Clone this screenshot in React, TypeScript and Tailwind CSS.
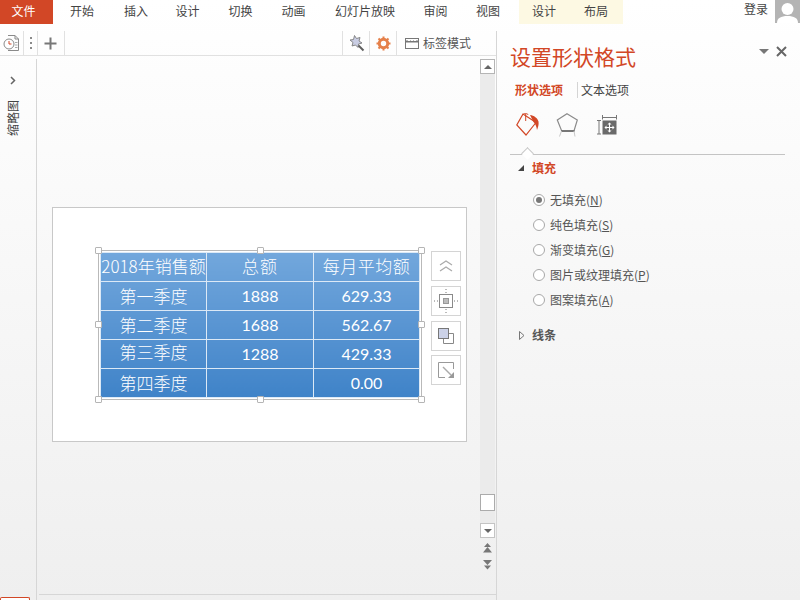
const cjk = "font-['Noto_Sans_CJK_SC','Liberation_Sans',sans-serif]";

const tabs = [
  { label: "开始", w: "w-[58px]" },
  { label: "插入", w: "w-[50px]" },
  { label: "设计", w: "w-[53px]" },
  { label: "切换", w: "w-[53px]" },
  { label: "动画", w: "w-[53px]" },
  { label: "幻灯片放映", w: "w-[90px]" },
  { label: "审阅", w: "w-[51px]" },
  { label: "视图", w: "w-[54px]" },
];

const rows = [
  ["第一季度", "1888", "629.33"],
  ["第二季度", "1688", "562.67"],
  ["第三季度", "1288", "429.33"],
  ["第四季度", "", "0.00"],
];

const fills = [
  { name: "无填充", key: "N", on: true },
  { name: "纯色填充", key: "S" },
  { name: "渐变填充", key: "G" },
  { name: "图片或纹理填充", key: "P" },
  { name: "图案填充", key: "A" },
];

function Handle({ className }: { className: string }) {
  return <span className={`absolute h-[7px] w-[7px] rounded-[1px] border border-[#b5b5b5] bg-white ${className}`} />;
}

function SideButton({ children }: { children: React.ReactNode }) {
  return (
    <div className="flex h-[30px] w-[30px] items-center justify-center border border-[#d4d4d4] bg-white">
      {children}
    </div>
  );
}

function Toolbar() {
  return (
    <div className="flex h-[25px] items-stretch border-b border-[#e1e1e1]">
      <div className="flex w-[24px] items-center justify-center border-r border-[#e1e1e1]">
        <svg width="17" height="18" viewBox="0 0 17 18" fill="none">
          <path d="M5 1.500h7l3.500 3.500v11.500H5" stroke="#8a8a8a" />
          <path d="M12 1.500v3.500h3.500" stroke="#8a8a8a" />
          <circle cx="6" cy="10" r="5" fill="#fff" stroke="#8a8a8a" />
          <path d="M6 7v3h2.500" stroke="#d24726" />
          <path d="M12 8.500h2.500M12 11h2.500M12 13.500h2.500" stroke="#aaa" />
        </svg>
      </div>
      <div className="flex w-[14px] flex-col items-center justify-center gap-[3px] border-r border-[#e1e1e1]">
        <span className="h-[2px] w-[2px] bg-[#8a8a8a]" />
        <span className="h-[2px] w-[2px] bg-[#8a8a8a]" />
        <span className="h-[2px] w-[2px] bg-[#8a8a8a]" />
      </div>
      <div className="flex w-[27px] items-center justify-center border-r border-[#e1e1e1] pr-[2px]">
        <svg width="13" height="13" viewBox="0 0 13 13">
          <path d="M6.500 0.500v12M0.500 6.500h12" stroke="#777" strokeWidth="2" />
        </svg>
      </div>
      <div className="flex-1 border-r border-[#e1e1e1]" />
      <div className="flex w-[27px] items-center justify-center border-r border-[#e1e1e1]">
        <svg width="18" height="18" viewBox="0 0 18 18" fill="none">
          <path d="M7.500 1.500l2 3 3.500-1-1 3.500 3 2-3.500 1-.5 3.500-2.500-2.500-3.500 1 1-3.500-3-2.500 3.500-.5z" fill="#c9cde3" stroke="#7d7d7d" strokeWidth="0.9" />
          <path d="M11.500 11.500l5 5" stroke="#5f5f5f" strokeWidth="2" />
        </svg>
      </div>
      <div className="flex w-[27px] items-center justify-center border-r border-[#e1e1e1]">
        <svg width="15" height="15" viewBox="0 0 15 15" fill="none">
          <circle cx="7.500" cy="7.500" r="4.200" stroke="#e5804a" strokeWidth="3" />
          <path d="M7.500 0.500v2.500M7.500 12v2.500M0.500 7.500h2.500M12 7.500h2.500M2.500 2.500l1.800 1.800M10.700 10.700l1.800 1.800M12.500 2.500l-1.800 1.800M4.300 10.700l-1.800 1.800" stroke="#e5804a" strokeWidth="2" />
        </svg>
      </div>
      <div className="flex w-[99px] items-center pl-[8px]">
        <svg width="14" height="11" viewBox="0 0 14 11" fill="none">
          <rect x="0.500" y="0.500" width="13" height="10" stroke="#777" />
          <path d="M0.500 3.500h13" stroke="#777" strokeWidth="2" />
          <path d="M3 2.500h2M6 2.500h2M9 2.500h2" stroke="#fff" />
        </svg>
        <span className="ml-[4px] text-[12px] text-[#555]">标签模式</span>
      </div>
    </div>
  );
}

function SlideTable() {
  const cell = "border border-[#dce9f6] text-center text-white";
  return (
    <table className="w-[320px] table-fixed border-collapse bg-gradient-to-b from-[#72a7dc] to-[#3f83c8]">
      <thead>
        <tr className="h-[29px]">
          <th className={`${cell} w-[106px] pb-[4px] whitespace-nowrap text-[17px] leading-none font-light`}>2018年销售额</th>
          <th className={`${cell} w-[107px] pb-[4px] text-[17px] leading-none font-light tracking-[1px]`}>总额</th>
          <th className={`${cell} pb-[4px] text-[17px] leading-none font-light tracking-[0.5px]`}>每月平均额</th>
        </tr>
      </thead>
      <tbody>
        {rows.map((row, i) => (
          <tr key={row[0]} className="h-[29px]">
            <td className={`${cell} text-[17px] leading-none font-light ${i === 2 ? "pb-[6px]" : "pb-[2px]"}`}>{row[0]}</td>
            <td className={`${cell} pb-[1px] font-['Lato',sans-serif] text-[16px] leading-none`}>{row[1]}</td>
            <td className={`${cell} pb-[1px] font-['Lato',sans-serif] text-[16px] leading-none`}>{row[2]}</td>
          </tr>
        ))}
      </tbody>
    </table>
  );
}

function Slide() {
  return (
    <div className="mt-[148px] ml-[15px] h-[235px] w-[415px] border border-[#c8c8c8] bg-white pt-[42px] pl-[45px]">
      <div className="flex items-start">
        <div className="relative border border-[#b9b9b9] p-[1px]">
          <SlideTable />
          <Handle className="-top-[4px] -left-[4px]" />
          <Handle className="-top-[4px] left-[158px]" />
          <Handle className="-top-[4px] -right-[4px]" />
          <Handle className="top-[70px] -left-[4px]" />
          <Handle className="top-[70px] -right-[4px]" />
          <Handle className="-bottom-[4px] -left-[4px]" />
          <Handle className="-bottom-[4px] left-[158px]" />
          <Handle className="-bottom-[4px] -right-[4px]" />
        </div>
        <div className="mt-[1px] ml-[9px] flex flex-col gap-[5px]">
          <SideButton>
            <svg width="16" height="14" viewBox="0 0 16 14" fill="none">
              <path d="M2 6l6-4 6 4M2 12l6-4 6 4" stroke="#aaa" strokeWidth="1.200" />
            </svg>
          </SideButton>
          <SideButton>
            <svg width="24" height="24" viewBox="0 0 24 24" fill="none">
              <rect x="5.500" y="5.500" width="13" height="13" stroke="#8a8a8a" />
              <rect x="9.500" y="9.500" width="5" height="5" fill="#bdbdbd" stroke="#999" />
              <path d="M12 0v4M12 20v4M0 12h4M20 12h4" stroke="#777" strokeDasharray="1 2" />
            </svg>
          </SideButton>
          <SideButton>
            <svg width="16" height="16" viewBox="0 0 16 16" fill="none">
              <path d="M11 5.500h4.500v10h-10V11" stroke="#888" />
              <rect x="0.500" y="0.500" width="10" height="10" fill="#ccd2e8" stroke="#777" />
            </svg>
          </SideButton>
          <div className="-mt-[1px]">
            <SideButton>
              <svg width="16" height="16" viewBox="0 0 16 16" fill="none">
                <path d="M7 15.500H0.500v-15h15V7" stroke="#999" />
                <path d="M5 5l8 8" stroke="#aaa" strokeWidth="1.500" />
                <path d="M16 10v6h-6z" fill="#999" />
              </svg>
            </SideButton>
          </div>
        </div>
      </div>
    </div>
  );
}

function Scrollbar() {
  return (
    <div className="mr-[1px] flex w-[15px] flex-col items-center">
      <div className="flex h-[15px] w-[15px] items-center justify-center border border-[#b5b5b5] bg-white">
        <span className="h-0 w-0 border-x-[4px] border-b-[4px] border-x-transparent border-b-[#666]" />
      </div>
      <div className="flex h-[449px] w-[15px] flex-col bg-[#ebebeb] pt-[420px]">
        <div className="h-[17px] w-[15px] border border-[#ababab] bg-white" />
      </div>
      <div className="flex h-[15px] w-[15px] items-center justify-center border border-[#c4c4c4] bg-white">
        <span className="h-0 w-0 border-x-[4px] border-t-[4px] border-x-transparent border-t-[#666]" />
      </div>
      <div className="flex flex-col items-center gap-[7px] pt-[5px]">
        <svg width="9" height="10" viewBox="0 0 9 10">
          <path d="M4.500 0L8 4H1zM4.500 4L9 9.500H0z" fill="#777" />
        </svg>
        <svg width="9" height="10" viewBox="0 0 9 10">
          <path d="M0 0h9L4.500 5zM1 5.500h7l-3.500 4z" fill="#777" />
        </svg>
      </div>
    </div>
  );
}

function Panel() {
  return (
    <aside className="relative w-[304px] border-l border-[#d6d6d6] pl-[14px]">
      <div className="flex h-[37px] items-start pt-[10px]">
        <h1 className="-ml-[1px] text-[21px] leading-[30px] font-normal text-[#d24726]">设置形状格式</h1>
        <svg className="mt-[8px] ml-[123px]" width="11" height="6" viewBox="0 0 11 6">
          <path d="M0 0h10L5 5z" fill="#777" />
        </svg>
        <svg className="mt-[5px] ml-[6px]" width="11" height="11" viewBox="0 0 11 11">
          <path d="M1 1l9 9M10 1l-9 9" stroke="#666" strokeWidth="2" />
        </svg>
      </div>
      <div className="mt-[13px] flex h-[18px] items-center text-[12px] leading-none">
        <span className="ml-[4px] font-bold text-[#d24726]">形状选项</span>
        <span className="ml-[14px] h-[16px] w-px bg-[#d4d4d4]" />
        <span className="ml-[3px] text-[#444]">文本选项</span>
      </div>
      <div className="mt-[13px] flex h-[27px] items-start">
        <svg className="ml-[5px]" width="26" height="26" viewBox="0 0 26 26" fill="none">
          <path d="M7 2L0.800 13 10 23l10-12.500z" stroke="#d24726" strokeWidth="1.200" />
          <path d="M7 3c0-2 5-2 5 0M9.700 2v7" stroke="#d24726" />
          <path d="M14 3c4 .5 7.500 3 8.500 6.500.5 3-.5 6-1.500 8.500-.5-3.500-1.500-6-3.500-8z" fill="#d24726" />
        </svg>
        <svg className="mt-[1px] ml-[14px]" width="22" height="24" viewBox="0 0 22 24" fill="none">
          <path d="M11 0.800L21.300 7 18 18H5.700L1.300 7z" stroke="#8a8a8a" strokeWidth="1.200" />
          <path d="M5 18h13.500" stroke="#777" strokeWidth="2" />
          <path d="M5.500 18l-2 5.500M18 18l1 5.500" stroke="#c8c8c8" />
        </svg>
        <svg className="mt-[2px] ml-[18px]" width="22" height="22" viewBox="0 0 22 22" fill="none">
          <path d="M6.500 1v4.500M20.500 1v4.500M6.500 3.500h14" stroke="#777" />
          <path d="M1 6.500h4M1 20h4M3 6.500V20" stroke="#777" />
          <rect x="6.500" y="6.500" width="14" height="14" fill="#6a6a6a" />
          <path d="M13.500 9v9M9 13.500h9" stroke="#fff" />
          <path d="M13.500 8.500l-2 2h4zM13.500 18.500l-2-2h4zM8.500 13.500l2-2v4zM18.500 13.500l-2-2v4z" fill="#fff" />
        </svg>
      </div>
      <div className="relative mt-[15px] mr-[15px] -ml-[1px] h-px bg-[#c4c4c4]">
        <span className="absolute -top-[5px] left-[13px] h-[9px] w-[9px] rotate-45 border-t border-l border-[#c4c4c4] bg-white" />
      </div>
      <div className="mt-[5px] flex h-[16px] items-center">
        <span className="ml-[7px] h-0 w-0 border-b-[6px] border-l-[6px] border-b-[#444] border-l-transparent" />
        <span className="ml-[8px] text-[12px] leading-none font-bold text-[#d24726]">填充</span>
      </div>
      <ul className="mt-[11px] flex flex-col">
        {fills.map((f) => (
          <li key={f.key} className="flex h-[25px] items-center text-[12px] text-[#555]">
            <span className="ml-[22px] flex h-[12px] w-[12px] items-center justify-center rounded-full border border-[#a8a8a8] bg-white">
              {f.on ? <span className="h-[6px] w-[6px] rounded-full bg-[#777]" /> : null}
            </span>
            <span className="ml-[5px]">
              {f.name}(<span className="underline">{f.key}</span>)
            </span>
          </li>
        ))}
      </ul>
      <div className="mt-[15px] flex h-[16px] items-center">
        <svg className="ml-[8px]" width="6" height="9" viewBox="0 0 6 9" fill="none">
          <path d="M0.500 0.500l4.500 4-4.500 4z" stroke="#777" />
        </svg>
        <span className="ml-[7px] text-[12px] leading-none font-bold text-[#555]">线条</span>
      </div>
    </aside>
  );
}

export default function App() {
  return (
    <div className={`relative flex h-[600px] w-[800px] flex-col overflow-hidden bg-gradient-to-b from-white to-[#efefef] ${cjk}`}>
      <nav className="flex h-[24px] items-stretch text-[12px] text-[#444]">
        <div className="flex w-[53px] items-center justify-center bg-[#d24726] pr-[6px] pb-[2px] text-white">文件</div>
        {tabs.map((t) => (
          <div key={t.label} className={`flex items-center justify-center pb-[2px] ${t.w}`}>{t.label}</div>
        ))}
        <div className="ml-[4px] flex w-[104px] items-center bg-[#fdf9e3] pb-[2px]">
          <span className="w-[50px] text-center">设计</span>
          <span className="w-[54px] text-center">布局</span>
        </div>
        <div className="flex flex-1 items-start justify-end">
          <span className="mr-[7px]">登录</span>
          <div className="flex h-[23px] w-[25px] items-end justify-center overflow-hidden bg-[#b4b4b4]">
            <svg width="21" height="21" viewBox="0 0 21 21">
              <circle cx="10.500" cy="7" r="6" fill="#fff" />
              <path d="M0 21c0-5 4-7 10.500-7S21 16 21 21z" fill="#fff" />
            </svg>
          </div>
        </div>
      </nav>
      <div className="mt-[7px] flex min-h-0 flex-1">
        <div className="flex w-[496px] flex-col">
          <Toolbar />
          <div className="mt-[3px] flex min-h-0 flex-1">
            <div className="flex w-[37px] flex-col items-center border-r border-[#d6d6d6] pt-[17px] pr-[10px]">
              <svg width="6" height="9" viewBox="0 0 6 9" fill="none">
                <path d="M1 1l3.500 3.500L1 8" stroke="#666" strokeWidth="1.500" />
              </svg>
              <span className="mt-[15px] rotate-180 text-[12px] leading-[12px] text-[#444] [text-orientation:sideways] [writing-mode:vertical-rl]">缩略图</span>
            </div>
            <div className="flex min-w-0 flex-1 flex-col">
              <div className="flex min-h-0 flex-1">
                <div className="min-w-0 flex-1">
                  <Slide />
                </div>
                <Scrollbar />
              </div>
              <div className="ml-[2px] h-px bg-[#d6d6d6]" />
              <div className="h-[5px]" />
            </div>
          </div>
        </div>
        <Panel />
      </div>
      <span className="absolute bottom-0 left-0 h-[3px] w-[30px] rounded-t-[2px] border-x border-t border-[#d24726] bg-white" />
    </div>
  );
}
